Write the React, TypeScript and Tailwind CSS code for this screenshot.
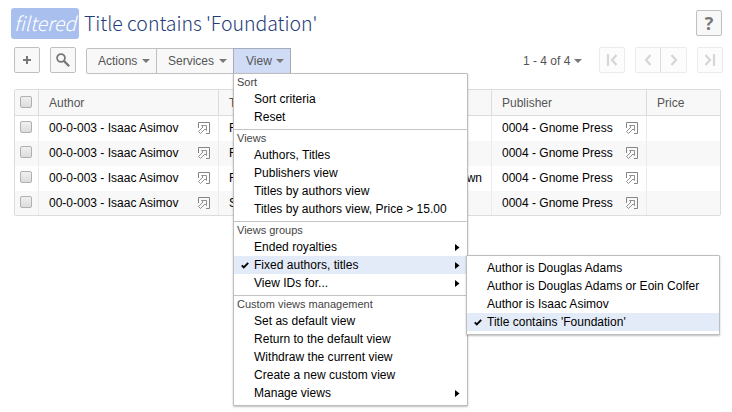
import type { ReactNode } from 'react';

const boxButton = 'flex h-[26px] w-[26px] items-center justify-center rounded-[2px] border border-[#c0c0c0] bg-[#f8f8f8]';
const pagerButton = 'flex h-[26px] w-[26px] items-center justify-center border border-[#ebebeb] bg-[#fcfcfc]';

function Caret() {
  return (
    <svg width="8" height="4" viewBox="0 0 8 4" className="shrink-0">
      <path d="M0 0h8L4 4z" fill="#777" />
    </svg>
  );
}

function OpenIcon() {
  return (
    <svg width="13" height="13" viewBox="0 0 13 13" fill="none" stroke="#858585" className="mt-[3px] shrink-0">
      <path d="M.5 6V.5h11v11H8" />
      <path d="M3.5 3.5h5v5L7 7l-4.500 4.500-2-2L5 5z" strokeWidth=".9" />
    </svg>
  );
}

function Check() {
  return (
    <svg width="8" height="7" viewBox="0 0 8 7" fill="none" className="absolute left-[7px] top-[6px]">
      <path d="M.8 3.4l2 2L7.2.9" stroke="#000" strokeWidth="1.9" />
    </svg>
  );
}

function Checkbox() {
  return <span className="block h-3 w-3 rounded-[2px] border border-[#b0b0b0] bg-linear-to-b from-[#f0f0f0] to-[#dcdcdc]" />;
}

function Pager({ d, className = '' }: { d: string; className?: string }) {
  return (
    <button className={`${pagerButton} ${className}`}>
      <svg width="14" height="14" viewBox="0 0 14 14" fill="none" stroke="#d6d6d6" strokeWidth="2.2">
        <path d={d} />
      </svg>
    </button>
  );
}

function Item({ label, checked, sub }: { label: string; checked?: boolean; sub?: boolean }) {
  return (
    <div className={`relative flex h-[18px] items-center justify-between pl-5 pr-[7px] ${checked ? 'bg-[#e4ebf8]' : ''}`}>
      {checked && <Check />}
      <span className="whitespace-nowrap tracking-[0.02px]">{label}</span>
      {sub && (
        <svg width="5" height="7" viewBox="0 0 5 7">
          <path d="M0 0v7l4.500-3.500z" fill="#000" />
        </svg>
      )}
    </div>
  );
}

function Section({ title, last, children }: { title: string; last?: boolean; children: ReactNode }) {
  return (
    <section className={`pb-[3px] ${last ? '' : 'border-b border-[#c4c4c4]'}`}>
      <h2 className="h-4 pl-[3px] text-[11px] leading-[17px] text-[#444]">{title}</h2>
      {children}
    </section>
  );
}

const rows = [
  { title: 'Foundation', publication: '' },
  { title: 'Foundation', publication: '' },
  { title: 'Foundation', publication: 'Unknown' },
  { title: 'Second Foundation', publication: '' },
];
const columns = 'grid grid-cols-[23px_180px_273px_155px_74px]';
const head = 'flex items-center border-l border-[#dcdcdc] pl-[10px]';
const cell = 'flex items-start justify-between border-l border-[#ebebeb] pl-[10px] pr-[7px] pt-[3px]';

export default function App() {
  return (
    <div className="relative h-[412px] w-[732px] overflow-hidden bg-white pt-2 font-['Liberation_Sans',Arial,sans-serif] text-[12px] leading-[18px] text-black">
      <header className="flex h-[31px] items-start pl-[11px] pr-[10px] font-['Noto_Sans_CJK_SC',sans-serif] text-[19.500px] font-light leading-[30px] text-[#1f3d7a]">
        <span className="flex h-[31px] w-[68px] items-center justify-center rounded-[3px] bg-[#a9c0ef] pb-px italic text-white">filtered</span>
        <h1 className="ml-[5px] whitespace-nowrap tracking-[-0.03px]">Title contains 'Foundation'</h1>
        <button className="ml-auto mt-[2px] flex h-[26px] w-[26px] items-center justify-center rounded-[2px] border border-[#c0c0c0] bg-[#f8f8f8] font-['Open_Sans',sans-serif] text-[18px] font-bold leading-none text-[#777]">?</button>
      </header>

      <nav className="mt-2 flex h-[27px] items-start pl-[14px] text-[#555]">
        <button className={boxButton}>
          <svg width="8" height="8" viewBox="0 0 8 8"><path d="M4 0v8M0 4h8" stroke="#777" strokeWidth="2" /></svg>
        </button>
        <button className={`ml-[10px] ${boxButton}`}>
          <svg width="14" height="14" viewBox="0 0 14 14" fill="none" stroke="#777" strokeWidth="1.8">
            <circle cx="5" cy="5" r="3.900" /><path d="M7.900 7.900l5.300 5.300" strokeWidth="2.200" />
          </svg>
        </button>
        <div className="ml-[10px] mt-px flex h-[26px] rounded-l-[2px] border border-[#c0c0c0] bg-[#f8f8f8]">
          <button className="flex w-[69px] items-center justify-between pl-[11px] pr-[6px]">Actions<Caret /></button>
          <button className="flex w-[77px] items-center justify-between border-l border-[#c0c0c0] pl-[11px] pr-[6px]">Services<Caret /></button>
          <button className="-my-px -mr-px flex w-[58px] items-center justify-between border border-[#a5abb8] bg-[#d0dcf5] pl-[12px] pr-[6px]">View<Caret /></button>
        </div>
        <div className="ml-[232px] mt-px flex h-[26px] w-[59px] items-center justify-between whitespace-nowrap">1 - 4 of 4<Caret /></div>
        <Pager className="ml-[17px] rounded-[2px]" d="M3 1v12M11.500 2L7 7L11.500 12" />
        <Pager className="ml-[10px] rounded-l-[2px] border-r-[#dcdcdc]" d="M9.500 2L5 7l4.500 5" />
        <Pager className="w-[25px] rounded-r-[2px] border-l-0" d="M4.500 2L9 7l-4.500 5" />
        <Pager className="ml-[10px] rounded-[2px]" d="M2.500 2L7 7L2.500 12M11 1v12" />
      </nav>

      <main className="ml-[14px] mt-[15px] w-[707px] rounded-[2px] border border-[#dcdcdc]">
        <div className={`${columns} h-[26px] border-b border-[#dcdcdc] bg-[#f8f8f8] text-[#555]`}>
          <span className="flex items-start pl-[5px] pt-[6px]"><Checkbox /></span>
          <span className={head}>Author</span>
          <span className={head}>Title</span>
          <span className={head}>Publisher</span>
          <span className={head}>Price</span>
        </div>
        {rows.map((row, i) => (
          <div key={i} className={`${columns} ${i === 3 ? 'h-6' : 'h-[25px]'} ${i % 2 ? 'bg-[#f8f8f8]' : 'bg-white'}`}>
            <span className="flex items-start pl-[5px] pt-[5px]"><Checkbox /></span>
            <span className={cell}>00-0-003 - Isaac Asimov<OpenIcon /></span>
            <span className={cell}><span>{row.title}</span><span className="mr-0.5">{row.publication}</span></span>
            <span className={cell}>0004 - Gnome Press<OpenIcon /></span>
            <span className={cell} />
          </div>
        ))}
      </main>

      <div className="absolute left-[233px] top-[73px] w-[235px] rounded-[1px] border border-[#bdbdbd] bg-white shadow-[0_1px_2px_rgba(0,0,0,0.25)]">
        <Section title="Sort">
          <Item label="Sort criteria" />
          <Item label="Reset" />
        </Section>
        <Section title="Views">
          <Item label="Authors, Titles" />
          <Item label="Publishers view" />
          <Item label="Titles by authors view" />
          <Item label="Titles by authors view, Price > 15.00" />
        </Section>
        <Section title="Views groups">
          <Item label="Ended royalties" sub />
          <Item label="Fixed authors, titles" checked sub />
          <Item label="View IDs for..." sub />
        </Section>
        <Section title="Custom views management" last>
          <Item label="Set as default view" />
          <Item label="Return to the default view" />
          <Item label="Withdraw the current view" />
          <Item label="Create a new custom view" />
          <Item label="Manage views" sub />
        </Section>
      </div>

      <div className="absolute left-[466px] top-[255px] w-[254px] rounded-[1px] border border-[#bdbdbd] bg-white py-[3px] shadow-[0_1px_2px_rgba(0,0,0,0.25)]">
        <Item label="Author is Douglas Adams" />
        <Item label="Author is Douglas Adams or Eoin Colfer" />
        <Item label="Author is Isaac Asimov" />
        <Item label="Title contains 'Foundation'" checked />
      </div>
    </div>
  );
}
